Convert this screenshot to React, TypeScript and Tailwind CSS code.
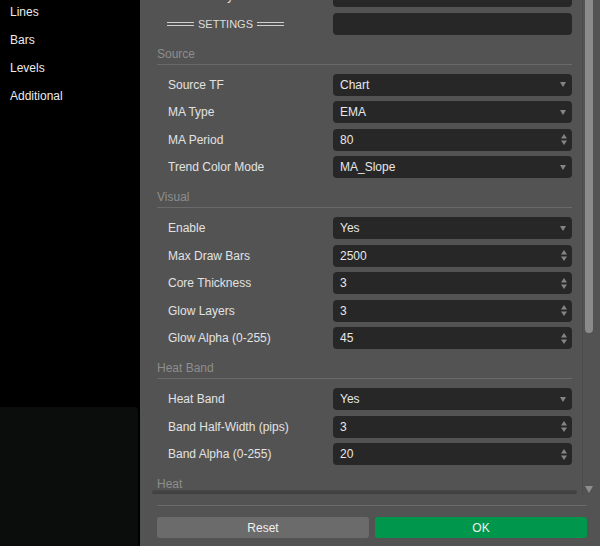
import * as React from 'react';

type Field = { label: string; value: string; kind: 'select' | 'number' | 'text' };

const NAV_ITEMS = ['Lines', 'Bars', 'Levels', 'Additional'];

const SECTIONS: { title: string; fields: Field[] }[] = [
  {
    title: 'Source',
    fields: [
      { label: 'Source TF', value: 'Chart', kind: 'select' },
      { label: 'MA Type', value: 'EMA', kind: 'select' },
      { label: 'MA Period', value: '80', kind: 'number' },
      { label: 'Trend Color Mode', value: 'MA_Slope', kind: 'select' },
    ],
  },
  {
    title: 'Visual',
    fields: [
      { label: 'Enable', value: 'Yes', kind: 'select' },
      { label: 'Max Draw Bars', value: '2500', kind: 'number' },
      { label: 'Core Thickness', value: '3', kind: 'number' },
      { label: 'Glow Layers', value: '3', kind: 'number' },
      { label: 'Glow Alpha (0-255)', value: '45', kind: 'number' },
    ],
  },
  {
    title: 'Heat Band',
    fields: [
      { label: 'Heat Band', value: 'Yes', kind: 'select' },
      { label: 'Band Half-Width (pips)', value: '3', kind: 'number' },
      { label: 'Band Alpha (0-255)', value: '20', kind: 'number' },
    ],
  },
  {
    title: 'Heat',
    fields: [
      { label: 'Heat Enable', value: 'Yes', kind: 'select' },
      { label: 'Heat Alpha (0-255)', value: '60', kind: 'number' },
    ],
  },
];

const SelectArrow = () => (
  <svg width="6" height="5" viewBox="0 0 6 5" className="shrink-0 mr-[1px]">
    <path d="M0 0H6L3 5Z" fill="#858585" />
  </svg>
);

const Spinner = () => (
  <svg width="6" height="11" viewBox="0 0 6 11" className="shrink-0">
    <path d="M3 0L6 4.5H0Z" fill="#858585" />
    <path d="M0 6.5H6L3 11Z" fill="#858585" />
  </svg>
);

const Input = ({ value, kind }: { value: string; kind: Field['kind'] }) => (
  <div className="flex-1 h-[22px] rounded-[4px] bg-[#272727] flex items-center pl-[7px] pr-[5px] text-[#e8e8e8]">
    <span className="flex-1 truncate">{value}</span>
    {kind === 'select' && <SelectArrow />}
    {kind === 'number' && <Spinner />}
  </div>
);

const Row = ({ label, children }: { label: React.ReactNode; children: React.ReactNode }) => (
  <div className="flex items-center">
    <div className="w-[176px] pl-[11px] text-[#e2e2e2] whitespace-nowrap">{label}</div>
    {children}
  </div>
);

const DoubleRule = () => <div className="w-[27px] h-[4px] border-y border-[#cfcfcf]" />;

export default function App() {
  return (
    <div className="flex h-[546px] w-[600px] overflow-hidden bg-black text-[12px] leading-[14px] font-['Liberation_Sans',Arial,sans-serif]">
      <aside className="w-[140px] flex flex-col">
        <nav className="-mt-[2px] flex flex-col">
          {NAV_ITEMS.map((item) => (
            <div key={item} className="h-[28px] flex items-center pl-[10px] text-[#ececec]">
              {item}
            </div>
          ))}
        </nav>
        <div className="flex-1" />
        <div className="h-[139px] mr-[2px] rounded-tr-[4px] bg-[#0b0c0c]" />
      </aside>

      <main className="flex-1 flex flex-col bg-[#535353]">
        <div className="h-[495px] flex">
          <div className="w-[443px] flex flex-col border-r border-[#4b4b4b]">
            <div className="flex-1 overflow-hidden pl-[17px] pr-[10px]">
              <div className="-mt-[15px] flex flex-col gap-[5.5px]">
                <Row label="License Key">
                  <Input value="ABSOLUTE TREND FLOW" kind="text" />
                </Row>
                <Row
                  label={
                    <div className="flex items-center gap-[4px] -ml-[1px] text-[11px] text-[#dcdcdc]">
                      <DoubleRule />
                      <span>SETTINGS</span>
                      <DoubleRule />
                    </div>
                  }
                >
                  <Input value="" kind="text" />
                </Row>
              </div>

              {SECTIONS.map((section) => (
                <section key={section.title}>
                  <div className="pt-[12px] pb-[3px] border-b border-[#6a6a6a] text-[#8e8e8e]">
                    {section.title}
                  </div>
                  <div className="pt-[9px] flex flex-col gap-[5.5px]">
                    {section.fields.map((field) => (
                      <Row key={field.label} label={field.label}>
                        <Input value={field.value} kind={field.kind} />
                      </Row>
                    ))}
                  </div>
                </section>
              ))}
            </div>
            <div className="h-[4px] ml-[12px] mr-[5px] mb-[1px] rounded-full bg-gradient-to-b from-[#474747] to-[#3f3f3f] blur-[0.5px]" />
          </div>

          <div className="flex-1 flex flex-col pl-[1px]">
            <div className="w-[8px] h-[333px] ml-[1px] rounded-b-[4px] bg-[#8b8b8b]" />
            <div className="flex-1" />
            <svg width="8" height="7" viewBox="0 0 8 7" className="ml-[1px] mb-[2px]">
              <path d="M0 0H8L4 7Z" fill="#8e8e8e" />
            </svg>
          </div>
        </div>

        <footer className="pl-[17px] pr-[13px] pt-[10px]">
          <div className="border-t border-[#6a6a6a] pt-[11px] flex gap-[6px]">
            <button className="flex-1 h-[21px] rounded-[3px] bg-[#6b6b6b] text-[#f0f0f0]">Reset</button>
            <button className="flex-1 h-[21px] rounded-[3px] bg-[#00964b] text-[#f0f0f0]">OK</button>
          </div>
        </footer>
      </main>
    </div>
  );
}
